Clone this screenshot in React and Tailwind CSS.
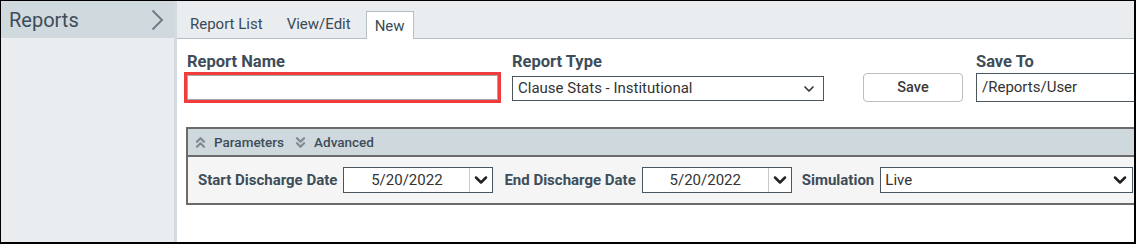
import { ChevronDown, ChevronsUp, ChevronsDown } from 'lucide-react'

const tabs = [
  { id: 'list', label: 'Report List' },
  { id: 'edit', label: 'View/Edit' },
  { id: 'new', label: 'New' },
]

function DateBox({ value }) {
  return (
    <div className="flex h-[26px] border border-[#4a5560] bg-white">
      <div className="w-[126px] border-r border-[#c9c9c9] text-center text-[15px] font-normal leading-[24px] text-[#333]">
        {value}
      </div>
      <div className="w-[22px] flex items-center justify-center">
        <ChevronDown size={20} strokeWidth={3} className="text-[#222]" />
      </div>
    </div>
  )
}

export default function App() {
  return (
    <div
      className="w-[1136px] h-[244px] border-t border-l border-b-2 border-r-2 border-black flex bg-white overflow-hidden"
      style={{ fontFamily: 'Roboto, "Liberation Sans", sans-serif' }}
    >
      {/* Sidebar */}
      <aside className="w-[176px] shrink-0 bg-[#e9edf0] border-r-[3px] border-[#d3dbe0]">
        <div className="h-[37px] bg-[#d0d9de] flex items-center justify-between pl-[8px] pr-[10px]">
          <span className="text-[20px] text-[#3d4d59]">Reports</span>
          <svg width="13" height="22" viewBox="0 0 13 22" className="mt-[1px]">
            <path d="M1.5 1.5 L11 11 L1.5 20.5" fill="none" stroke="#717d86" strokeWidth="2" />
          </svg>
        </div>
      </aside>

      {/* Main */}
      <main className="flex-1 min-w-0 flex flex-col">
        {/* Tabs */}
        <div className="h-[38px] shrink-0 bg-[#e9edf0] border-b border-[#b4c0c6] flex items-end pl-[1px]">
          {tabs.map((tab) =>
            tab.id === 'new' ? (
              <div
                key={tab.id}
                className="h-[28px] ml-[3px] px-[8px] -mb-px bg-white border border-b-0 border-[#b4c0c6] text-[15px] text-[#3a4a55] leading-[28px]"
              >
                {tab.label}
              </div>
            ) : (
              <div key={tab.id} className="h-[28px] px-[12px] text-[15px] text-[#3a4a55] leading-[28px]">
                {tab.label}
              </div>
            )
          )}
        </div>

        {/* Form row */}
        <div className="flex items-start pl-[7px] pt-[13px]">
          <div className="w-[317px]">
            <div className="text-[16.5px] font-bold text-[#3d4d59] leading-[20px] pl-[3px]">Report Name</div>
            <div className="h-[31px] border-[3px] border-[#f03c3c]">
              <div className="h-full border border-[#a8a8a8] bg-white" />
            </div>
          </div>
          <div className="ml-[11px] w-[312px]">
            <div className="text-[16.5px] font-bold text-[#3d4d59] leading-[20px]">Report Type</div>
            <div className="mt-[4px] h-[25px] border border-[#4a5560] bg-white flex items-center justify-between pl-[5px] pr-[6px]">
              <span className="text-[15px] text-[#333]">Clause Stats - Institutional</span>
              <ChevronDown size={16} strokeWidth={2.5} className="text-[#333]" />
            </div>
          </div>
          <button className="ml-[39px] mt-[21px] w-[100px] h-[29px] border border-[#bdbdbd] rounded-[4px] bg-white text-[14.5px] font-medium text-[#3a3a3a]">
            Save
          </button>
          <div className="ml-[13px] flex-1">
            <div className="text-[16.5px] font-bold text-[#3d4d59] leading-[20px]">Save To</div>
            <div className="mt-[1px] h-[29px] border border-r-0 border-[#4a5560] bg-white pl-[5px] text-[15px] leading-[27px] text-[#333]">
              /Reports/User
            </div>
          </div>
        </div>

        {/* Parameters panel */}
        <section className="ml-[9px] mt-[24px] border-t-2 border-l-2 border-b-2 border-[#6b6b6b] flex flex-col">
          <div className="h-[28px] bg-[#cfd8dd] border-b-2 border-[#6b6b6b] flex items-center pl-[4px] gap-[5px] text-[13.5px] font-medium text-[#3d4d59]">
            <ChevronsUp size={17} strokeWidth={3.2} className="text-[#7f8b93]" />
            <span>Parameters</span>
            <ChevronsDown size={17} strokeWidth={3.2} className="text-[#7f8b93] ml-[3px]" />
            <span>Advanced</span>
          </div>
          <div className="h-[46px] bg-[#f5f5f5] flex items-center pl-[10px] pr-[1px] text-[15px] font-bold text-[#3d4d59]">
            <span className="mr-[6px]">Start Discharge Date</span>
            <DateBox value="5/20/2022" />
            <span className="ml-[11px] mr-[6px]">End Discharge Date</span>
            <DateBox value="5/20/2022" />
            <span className="ml-[10px] mr-[6px]">Simulation</span>
            <div className="flex-1 h-[26px] border border-[#4a5560] bg-white flex items-center justify-between pl-[4px] pr-[2px]">
              <span className="font-normal text-[#333]">Live</span>
              <ChevronDown size={20} strokeWidth={3} className="text-[#222]" />
            </div>
          </div>
        </section>
      </main>
    </div>
  )
}
